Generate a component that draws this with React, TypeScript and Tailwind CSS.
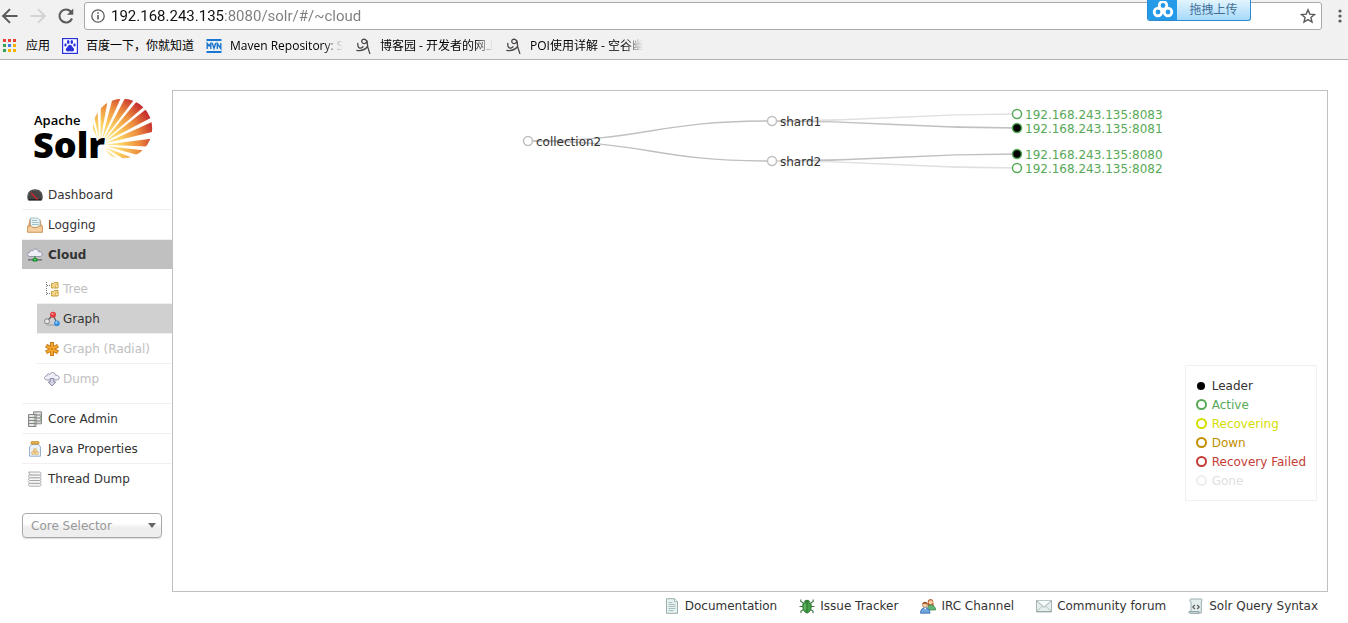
import type { ReactNode } from 'react';

function Svg({ children, size = 'size-4' }: { children: ReactNode; size?: string }) {
  return (
    <svg viewBox="0 0 16 16" className={`${size} shrink-0`} fill="none" aria-hidden="true">
      {children}
    </svg>
  );
}

function DashboardIcon() {
  return (
    <Svg>
      <path d="M.3 10C.3 5 3.8 2.300 8 2.300S15.700 5 15.700 10c0 2-.7 3.700-1.700 3.700H2C1 13.700.3 12 .3 10z" fill="#454545" />
      <path d="M1.500 8.500C2 5 4.500 3.400 8 3.400s6 1.600 6.500 5.100" stroke="#777" strokeWidth="1" strokeDasharray="1 1.500" />
      <path d="M2 12.500h12" stroke="#222" />
      <path d="M4 6l6.500 6.500" stroke="#e0202a" strokeWidth="1.300" />
    </Svg>
  );
}

function LoggingIcon() {
  return (
    <Svg>
      <path d="M2.500 2L1 10h14l-1.500-7.500z" fill="#d79a5c" />
      <path d="M3.500 1h7l2.500 2V11h-9.500z" fill="#e9f3f4" stroke="#93b5bb" strokeWidth=".8" />
      <path d="M5 3.500h5M5 5.500h6.500M5 7.500h6.500" stroke="#8cb3b8" strokeWidth=".8" />
      <path d="M.6 9h3.900l1 1.500h5l1-1.500h3.900v6.300H.6z" fill="#f5cfa0" stroke="#c98d4f" strokeWidth=".9" />
    </Svg>
  );
}

function CloudShape({ y = 0 }: { y?: number }) {
  return (
    <path
      transform={`translate(0 ${y})`}
      d="M3 9.500C-.5 9.300-.2 5.600 2.600 5.500 2.800 3.300 5 3 5.800 3.800 7.200 1 11.300 1.800 11.500 4.700c4.200-.5 5.200 4.600 1.500 4.800z"
      fill="#eeeef7"
      stroke="#8d8da5"
      strokeWidth=".9"
    />
  );
}

function CloudIcon() {
  return (
    <Svg>
      <CloudShape />
      <path d="M1 12.800h14" stroke="#777" strokeWidth="1.600" />
      <path d="M8 9.500v2" stroke="#3d9a45" strokeWidth="1.800" />
      <rect x="5.500" y="11.200" width="5" height="3.200" rx="1" fill="#168a2e" />
      <rect x="7" y="12" width="2" height="1.300" fill="#4fdf65" />
    </Svg>
  );
}

function TreeIcon() {
  return (
    <Svg>
      <path d="M2.500 1v13M3 4.500h4M3 12.500h4" stroke="#777" strokeDasharray="1 1" />
      <path d="M7.500 2.500h2l1-1h3.500v5.500H7.500z" fill="#f3d48b" stroke="#c7962f" strokeWidth=".9" />
      <path d="M7.500 10.500h2l1-1h3.500v5.500H7.500z" fill="#f3d48b" stroke="#c7962f" strokeWidth=".9" />
      <path d="M11.500 4h2.500v2.500h-2.500zM11.500 12h2.500v2.500h-2.500z" fill="#fbe9b8" stroke="#c7962f" strokeWidth=".5" />
    </Svg>
  );
}

function GraphIcon() {
  return (
    <Svg>
      <path d="M3 10l6-6 4 8" stroke="#555" strokeWidth="1.200" />
      <ellipse cx="7" cy="14" rx="5" ry=".8" fill="#aaa" />
      <circle cx="3" cy="10.300" r="2.500" fill="#e8e8e8" stroke="#777" strokeWidth=".9" />
      <circle cx="9" cy="3.800" r="3" fill="#e33a3c" />
      <circle cx="8.500" cy="2.900" r="1.100" fill="#f79090" />
      <circle cx="12.900" cy="12.300" r="2.900" fill="#3990dc" />
      <circle cx="12.400" cy="11.400" r="1.100" fill="#9fd3ff" />
    </Svg>
  );
}

function RadialIcon() {
  return (
    <Svg>
      <path d="M8 3v10M3.700 5.500l8.600 5M12.300 5.500l-8.600 5" stroke="#b76c0d" strokeWidth="3.800" strokeLinecap="square" />
      <path d="M8 3v10M3.700 5.500l8.600 5M12.300 5.500l-8.600 5" stroke="#f4a72e" strokeWidth="2.400" strokeLinecap="square" />
      <circle cx="8" cy="8" r="1.100" fill="#d07d12" />
    </Svg>
  );
}

function DumpIcon() {
  return (
    <Svg>
      <CloudShape y={-0.500} />
      <path d="M6.200 7.500h3.600V11h2L8 15l-3.800-4h2z" fill="#d5d5e6" stroke="#8080a0" strokeWidth=".9" />
    </Svg>
  );
}

function CoreAdminIcon() {
  return (
    <Svg>
      <path d="M6.500.8h8v12h-8z" fill="#d4d4d4" stroke="#8a8a8a" />
      <path d="M6.500 4h8M6.500 7h8M6.500 10h8" stroke="#8a8a8a" />
      <path d="M1.500 3.500h7.500v12H1.500z" fill="#d8d8d8" stroke="#858585" />
      <path d="M1.500 6.500H9M1.500 9.500H9M1.500 12.500H9" stroke="#858585" />
      <path d="M3 5h3M3 8h3M3 11h3M3 14h3M10.500 2.500h2M10.500 5.500h2M10.500 8.500h2" stroke="#f6f6f6" />
      <path d="M7 5h1M7 8h1M7 11h1M7 14h1M13 5.500h1M13 8.500h1" stroke="#7fae77" />
    </Svg>
  );
}

function JavaIcon() {
  return (
    <Svg>
      <path d="M4.500 3.500L2.500 6v9.200h11V6l-2-2.500z" fill="#e8f0f9" stroke="#8baac9" strokeWidth=".9" />
      <rect x="4" y=".6" width="8" height="2.500" rx=".8" fill="#edb44c" stroke="#b77f20" strokeWidth=".7" />
      <circle cx="8" cy="9" r="1.600" fill="#f5d596" stroke="#d4a658" strokeWidth=".6" />
      <circle cx="6.200" cy="12" r="1.700" fill="#f5d596" stroke="#d4a658" strokeWidth=".6" />
      <circle cx="9.800" cy="12" r="1.700" fill="#f5d596" stroke="#d4a658" strokeWidth=".6" />
    </Svg>
  );
}

function ThreadIcon() {
  return (
    <Svg>
      <g fill="#f6f6f6" stroke="#999" strokeWidth=".8">
        <path d="M2 12.300h10.500c2 0 2 2.900 0 2.900H3.500C1 15.200 1 13 2.500 12.300z" />
        <path d="M2 9.500h10.500c2 0 2 2.800 0 2.800H3.500C1 12.300 1 10.200 2.500 9.500z" />
        <path d="M2 6.700h10.500c2 0 2 2.800 0 2.800H3.500C1 9.500 1 7.400 2.500 6.700z" />
        <path d="M2 3.900h10.500c2 0 2 2.800 0 2.800H3.500C1 6.700 1 4.600 2.500 3.900z" />
        <path d="M1.500 1h11c2 0 2 2.900 0 2.900H4C1.800 3.900 2.500 1.800 1.500 1z" />
      </g>
    </Svg>
  );
}

function DocumentIcon() {
  return (
    <Svg>
      <path d="M2.500.7h8l3 3v11.600h-11z" fill="#eaf3f2" stroke="#8fa5a4" strokeWidth=".9" />
      <path d="M10.500.7v3h3" fill="#fff" stroke="#8fa5a4" strokeWidth=".8" />
      <path d="M4.500 4.500h4M4.500 6.500h7M4.500 8.500h7M4.500 10.500h7M4.500 12.500h5" stroke="#9bb8b5" strokeWidth=".9" />
    </Svg>
  );
}

function BugIcon() {
  return (
    <Svg>
      <path d="M4.500 5L1.800 3.500V1.500M11.500 5l2.700-1.500v-2M4 8.500H.5M12 8.500h3.500M4.500 11.500L2 13v2M11.500 11.500L14 13v2" stroke="#39703a" strokeWidth="1.100" />
      <path d="M5 4.300C5.300 1 10.700 1 11 4.300z" fill="#347f38" />
      <path d="M4 5.500c1.800-1.300 6.200-1.300 8 0 .8 4-.5 9-4 9.500-3.500-.5-4.800-5.500-4-9.500z" fill="#45a049" stroke="#27702c" strokeWidth=".9" />
      <path d="M8 5v10" stroke="#27702c" strokeWidth=".8" />
      <path d="M6 6.500v5" stroke="#83c97f" />
    </Svg>
  );
}

function PeopleIcon() {
  return (
    <Svg>
      <path d="M7.700 3.500C8 .2 13.300-.3 13.300 4l.5 4H8z" fill="#b55e2e" />
      <circle cx="10.700" cy="4.300" r="2.100" fill="#f7cfa4" />
      <path d="M7.500 12c0-3.500 1-5 3.200-5s4.900 1.500 4.900 5z" fill="#61b577" stroke="#338249" strokeWidth=".7" />
      <circle cx="5" cy="7" r="2.500" fill="#f7cfa4" stroke="#a6693b" strokeWidth=".6" />
      <path d="M2.300 6.500c.2-4 5.300-3.300 5.500 0-2 0-3-1.200-3.500-1.200-.5.700-1 1-2 1.200z" fill="#8c4b22" />
      <path d="M.5 15.200C.5 11.500 2.400 9.700 5.200 9.700s4.800 1.800 4.800 5.500z" fill="#6ea5df" stroke="#3268a3" strokeWidth=".8" />
      <path d="M4 9.800l1.200 2 1.300-2z" fill="#fff" />
    </Svg>
  );
}

function MailIcon() {
  return (
    <Svg>
      <path d="M.5 2.500h15v11H.5z" fill="#e6eeed" stroke="#9aabaa" strokeWidth=".9" />
      <path d="M.8 13.300L6.500 8M15.200 13.300L9.500 8" stroke="#a7b8b7" strokeWidth=".8" />
      <path d="M.8 2.800L8 9.300l7.200-6.500" fill="#f7fafa" stroke="#90a3a2" strokeWidth=".9" />
      <path d="M.5 14h15" stroke="#8d9d9c" strokeWidth=".7" />
    </Svg>
  );
}

function ScriptIcon() {
  return (
    <Svg>
      <path d="M2.500 1h10.300c2 0 1.900 2 .5 2v12H3V3.500c-1.500 0-1.800-1.800-.5-2.500z" fill="#e4eeee" stroke="#90a5a5" strokeWidth=".9" />
      <path d="M1 13.500h10v1.800H2c-1 0-1.500-1-1-1.800z" fill="#d1dfdf" stroke="#7f9494" strokeWidth=".8" />
      <path d="M6.800 7L4.800 9l2 2M9.200 7l2 2-2 2" stroke="#555" strokeWidth="1.100" />
    </Svg>
  );
}

function SquiggleIcon() {
  return (
    <Svg>
      <path
        d="M1.800 5.500c-.4 4.500 2.500 6 5.200 3.200M10.800 3C8.500-.2 4.800 1.500 6 4.300c1.200 2.300 4.600 1.500 5-1.800 0 4.500 1 8.500 2.800 13M.8 12.300c4.200.8 8.200-.5 10.700-3.800"
        stroke="#4a464a"
        strokeWidth="1.300"
        strokeLinecap="round"
      />
    </Svg>
  );
}

const appColors = ['#e84234', '#e84234', '#e84234', '#35a353', '#3f7ef0', '#f5b400', '#35a353', '#f5b400', '#f5b400'];

function AppsIcon() {
  return (
    <Svg>
      {appColors.map((c, i) => (
        <rect key={i} x={1 + (i % 3) * 5} y={1 + Math.floor(i / 3) * 5} width="3" height="3" fill={c} />
      ))}
    </Svg>
  );
}

function PawIcon() {
  return (
    <Svg>
      <rect x=".6" y=".6" width="14.800" height="14.800" fill="#fff" stroke="#2a32dc" strokeWidth="1.200" />
      <g fill="#2a32dc">
        <ellipse cx="6.200" cy="4" rx="1.300" ry="1.900" />
        <ellipse cx="9.800" cy="4" rx="1.300" ry="1.900" />
        <ellipse cx="3.500" cy="6.900" rx="1.200" ry="1.700" />
        <ellipse cx="12.500" cy="6.900" rx="1.200" ry="1.700" />
        <path d="M8 6.800c1.800 0 1.900 1.900 3.200 3 1.800 1.500.8 4-1.200 3.700-1.400-.2-2.600-.2-4 0-2 .3-3-2.200-1.200-3.700C6.100 8.700 6.200 6.800 8 6.800z" />
      </g>
    </Svg>
  );
}

function MvnIcon() {
  return (
    <Svg>
      <path d="M.5 2h15M.5 14h15" stroke="#1976d2" strokeWidth="2" />
      <path d="M1.200 11V5.500L3 8l1.800-2.500V11M6.200 5L8 10.300 9.800 5M11.300 11V5.500l3.500 5V5" stroke="#1976d2" strokeWidth="1.400" />
    </Svg>
  );
}

const toolButton = 'flex size-5 items-center justify-center';

const bookmarks = [
  { label: '应用', icon: <AppsIcon />, width: 'w-6', gap: 'mr-3' },
  { label: '百度一下，你就知道', icon: <PawIcon />, width: 'w-[110px]', gap: 'mr-2.5' },
  { label: 'Maven Repository: S', icon: <MvnIcon />, width: 'w-[114px]', gap: 'mr-3', fade: true },
  { label: '博客园 - 开发者的网上', icon: <SquiggleIcon />, width: 'w-[114px]', gap: 'mr-3', fade: true },
  { label: 'POI使用详解 - 空谷幽', icon: <SquiggleIcon />, width: 'w-[114px]', gap: 'mr-3', fade: true },
];

function BrowserBar() {
  return (
    <header className="relative border-b border-[#b0b0b0] bg-[#f1f1f1] font-['Open_Sans','Noto_Sans_CJK_SC',sans-serif]">
      <div className="flex h-[30px] items-end">
        <div className="flex h-7 items-center gap-2">
          <button type="button" aria-label="Back" className={toolButton}>
            <Svg size="size-5">
              <path d="M14 8H2.800M8 2.500L2.500 8 8 13.500" stroke="#5a5a5a" strokeWidth="1.600" />
            </Svg>
          </button>
          <button type="button" aria-label="Forward" className={toolButton}>
            <Svg size="size-5">
              <path d="M2 8h11.200M8 2.500L13.500 8 8 13.500" stroke="#d3d3d3" strokeWidth="1.600" />
            </Svg>
          </button>
          <button type="button" aria-label="Reload" className={toolButton}>
            <Svg size="size-5">
              <path d="M12.800 10A5.200 5.200 0 1 1 11.800 4.400l1 1" stroke="#5a5a5a" strokeWidth="1.700" />
              <path d="M13.800 2v5h-5z" fill="#5a5a5a" />
            </Svg>
          </button>
        </div>
        <div className="ml-2 flex h-7 min-w-0 flex-1 items-center rounded-[3px] border border-[#a9a9a9] bg-white pr-[3px] pl-[5px]">
          <Svg>
            <circle cx="8" cy="8" r="6.200" stroke="#5a5a5a" strokeWidth="1.300" />
            <path d="M8 7v4.500M8 4.300v1.500" stroke="#5a5a5a" strokeWidth="1.600" />
          </Svg>
          <input
            aria-label="Address"
            defaultValue="192.168.243.135:8080/solr/#/~cloud"
            className="ml-[5px] min-w-0 flex-1 bg-[linear-gradient(to_right,#111_113px,#7c7c7c_113px)] bg-clip-text font-['Roboto',sans-serif] text-[15px] leading-6 text-transparent outline-none"
          />
          <button type="button" aria-label="Bookmark this page" className={toolButton}>
            <Svg>
              <path d="M8 1.800l1.800 4.300 4.700.4-3.600 3 1.100 4.600L8 11.600 4 14.100l1.100-4.600-3.600-3 4.700-.4z" stroke="#5a5a5a" strokeWidth="1.400" />
            </Svg>
          </button>
        </div>
        <button type="button" aria-label="Menu" className="ml-1.5 flex h-7 w-5 items-center justify-center">
          <Svg>
            <g fill="#5a5a5a">
              <circle cx="10" cy="3" r="1.600" />
              <circle cx="10" cy="8" r="1.600" />
              <circle cx="10" cy="13" r="1.600" />
            </g>
          </Svg>
        </button>
      </div>
      <nav aria-label="Bookmarks" className="flex h-[29px] items-center pt-0.5 pl-0.5">
        {bookmarks.map((b) => (
          <a key={b.label} href="#bookmark" className={`flex items-center gap-2 ${b.gap}`}>
            {b.icon}
            <span
              className={`${b.width} overflow-hidden text-xs leading-5 whitespace-nowrap text-black ${
                b.fade ? '[mask-image:linear-gradient(to_right,#000_82%,transparent_99%)]' : ''
              }`}
            >
              {b.label}
            </span>
          </a>
        ))}
      </nav>
      <button
        type="button"
        className="absolute top-0 right-[97px] flex h-[21px] w-[104px] items-stretch overflow-hidden rounded-b-[3px] border border-t-0 border-[#2a8bd0] bg-linear-to-b from-[#e3f4fe] to-[#a5d9fa] text-xs text-[#3f6f96]"
      >
        <span className="flex w-[29px] items-center justify-center bg-[#259ae8]">
          <svg viewBox="0 0 22 18" className="h-[18px] w-[22px]" fill="none" stroke="#fff" strokeWidth="2.800" aria-hidden="true">
            <circle cx="11" cy="4.500" r="3.800" />
            <circle cx="6" cy="11" r="3.800" />
            <circle cx="16" cy="11" r="3.800" />
          </svg>
        </span>
        <span className="flex-1 leading-5">拖拽上传</span>
      </button>
    </header>
  );
}

const rays: [number, number][] = [
  [115, 107], [102, 94], [89, 80], [75, 66], [62, 53], [50, 41],
  [38, 28], [24, 14], [7, -2], [-7, -15], [-21, -31], [-37, -46],
];

function rayPath([a, b]: [number, number]) {
  const point = (deg: number, r: number) => {
    const t = (deg * Math.PI) / 180;
    return `${(78 + r * Math.cos(t)).toFixed(2)} ${(55 - r * Math.sin(t)).toFixed(2)}`;
  };
  const mid = (a + b) / 2;
  return `M${point(mid, 4)}L${point(a, 75)}L${point(b, 75)}Z`;
}

function Logo() {
  return (
    <a href="#home" className="block" aria-label="Apache Solr">
      <svg viewBox="0 0 150 90" className="h-[90px] w-[150px]" aria-hidden="true">
        <defs>
          <radialGradient id="sun" gradientUnits="userSpaceOnUse" cx="78" cy="55" r="60">
            <stop offset=".1" stopColor="#fff0b0" />
            <stop offset=".35" stopColor="#fcd060" />
            <stop offset=".65" stopColor="#ed8f3e" />
            <stop offset=".95" stopColor="#c52a2c" />
          </radialGradient>
          <clipPath id="disc">
            <circle cx="100.500" cy="38.500" r="29.700" />
          </clipPath>
        </defs>
        <g clipPath="url(#disc)" fill="url(#sun)">
          {rays.map((r) => (
            <path key={r[0]} d={rayPath(r)} />
          ))}
        </g>
        <text x="12" y="35" className="fill-black font-['Open_Sans',sans-serif] text-[13px] font-semibold">
          Apache
        </text>
        <text x="11" y="68" className="fill-black font-['Open_Sans',sans-serif] text-[36px] font-extrabold">
          Solr
        </text>
      </svg>
    </a>
  );
}

const cloudViews = [
  { label: 'Tree', icon: <TreeIcon /> },
  { label: 'Graph', icon: <GraphIcon />, active: true },
  { label: 'Graph (Radial)', icon: <RadialIcon /> },
  { label: 'Dump', icon: <DumpIcon /> },
];

const rowClass = 'flex h-[29px] items-center gap-[5px] pl-[5px]';

function NavRow({ label, icon }: { label: string; icon: ReactNode }) {
  return (
    <a href="#nav" className={rowClass}>
      {icon}
      {label}
    </a>
  );
}

function Sidebar() {
  return (
    <aside className="w-[150px] shrink-0">
      <Logo />
      <ul>
        <li className="border-b border-[#f0f0f0]">
          <NavRow label="Dashboard" icon={<DashboardIcon />} />
        </li>
        <li className="border-b border-[#f0f0f0]">
          <NavRow label="Logging" icon={<LoggingIcon />} />
        </li>
        <li className="border-b border-[#f0f0f0]">
          <a href="#cloud" aria-current="true" className={`${rowClass} bg-[#c0c0c0] font-bold`}>
            <CloudIcon />
            Cloud
          </a>
          <ul className="mt-[5px] mb-2.5 pl-[15px]">
            {cloudViews.map((v) => (
              <li key={v.label} className="border-b border-[#f0f0f0] last:border-b-0">
                <a
                  href="#view"
                  className={`flex h-[29px] items-center gap-[3px] pl-[7px] ${v.active ? 'bg-[#d0d0d0] text-[#333]' : 'text-[#c0c0c0]'}`}
                >
                  {v.icon}
                  {v.label}
                </a>
              </li>
            ))}
          </ul>
        </li>
        <li className="border-b border-[#f0f0f0]">
          <NavRow label="Core Admin" icon={<CoreAdminIcon />} />
        </li>
        <li className="border-b border-[#f0f0f0]">
          <NavRow label="Java Properties" icon={<JavaIcon />} />
        </li>
        <li>
          <NavRow label="Thread Dump" icon={<ThreadIcon />} />
        </li>
      </ul>
      <div className="mt-5 mr-2.5 grid items-center">
        <select
          aria-label="Core Selector"
          className="col-start-1 row-start-1 h-[25px] appearance-none rounded-[4px] border border-[#aaa] bg-linear-to-b from-white from-40% to-[#eee] to-60% pl-2 text-[#999] shadow-[0_1px_1px_#ddd]"
        >
          <option>Core Selector</option>
        </select>
        <svg viewBox="0 0 8 5" className="pointer-events-none col-start-1 row-start-1 mr-1.5 h-[5px] w-2 justify-self-end" aria-hidden="true">
          <path d="M0 0h8L4 5z" fill="#666" />
        </svg>
      </div>
    </aside>
  );
}

const leaves = [
  { label: '192.168.243.135:8083', y: 23, from: 30, leader: false },
  { label: '192.168.243.135:8081', y: 37, from: 30, leader: true },
  { label: '192.168.243.135:8080', y: 63, from: 70, leader: true },
  { label: '192.168.243.135:8082', y: 77, from: 70, leader: false },
];

function link(x1: number, y1: number, x2: number, y2: number) {
  const m = (x1 + x2) / 2;
  return `M${x1} ${y1}C${m} ${y1} ${m} ${y2} ${x2} ${y2}`;
}

function ClusterGraph() {
  return (
    <svg viewBox="0 0 1154 100" className="w-full font-['DejaVu_Sans',sans-serif] text-xs" role="img" aria-label="Cloud graph">
      <g fill="none" strokeWidth="1.500">
        {leaves.map((l) => (
          <path key={l.label} d={link(599, l.from, 844, l.y)} stroke={l.leader ? '#c0c0c0' : '#e0e0e0'} />
        ))}
        <path d={link(355, 50, 599, 30)} stroke="#c0c0c0" />
        <path d={link(355, 50, 599, 70)} stroke="#c0c0c0" />
      </g>
      <g fill="#fff" stroke="#c0c0c0" strokeWidth="1.500">
        <circle cx="355" cy="50" r="4.500" />
        <circle cx="599" cy="30" r="4.500" />
        <circle cx="599" cy="70" r="4.500" />
      </g>
      <g fill="#333">
        <text x="363" y="55">collection2</text>
        <text x="607" y="35">shard1</text>
        <text x="607" y="75">shard2</text>
      </g>
      {leaves.map((l) => (
        <g key={l.label}>
          <circle cx="844" cy={l.y} r="4.500" fill={l.leader ? '#000' : '#fff'} stroke="#57a957" strokeWidth="1.500" />
          <text x="852" y={l.y + 5} fill="#57a957">
            {l.label}
          </text>
        </g>
      ))}
    </svg>
  );
}

const legend = [
  { label: 'Leader', text: 'text-[#333]', dot: 'size-2 bg-black' },
  { label: 'Active', text: 'text-[#57a957]', dot: 'size-[11px] border-2 border-[#57a957]' },
  { label: 'Recovering', text: 'text-[#d5dd00]', dot: 'size-[11px] border-2 border-[#d5dd00]' },
  { label: 'Down', text: 'text-[#c48f00]', dot: 'size-[11px] border-2 border-[#c48f00]' },
  { label: 'Recovery Failed', text: 'text-[#c43c35]', dot: 'size-[11px] border-2 border-[#c43c35]' },
  { label: 'Gone', text: 'text-[#e0e0e0]', dot: 'size-[11px] border-2 border-[#eee]' },
];

function Legend() {
  return (
    <ul className="mr-2.5 border border-[#f0f0f0] px-2.5 py-2.5">
      {legend.map((l) => (
        <li key={l.label} className={`flex h-[19px] items-center gap-[5px] ${l.text}`}>
          <span className="flex w-[11px] justify-center">
            <span className={`shrink-0 rounded-full ${l.dot}`} />
          </span>
          {l.label}
        </li>
      ))}
    </ul>
  );
}

const footerLinks = [
  { label: 'Documentation', icon: <DocumentIcon /> },
  { label: 'Issue Tracker', icon: <BugIcon /> },
  { label: 'IRC Channel', icon: <PeopleIcon /> },
  { label: 'Community forum', icon: <MailIcon /> },
  { label: 'Solr Query Syntax', icon: <ScriptIcon /> },
];

export default function App() {
  return (
    <div className="min-h-screen bg-white font-['DejaVu_Sans',sans-serif] text-xs text-[#333]">
      <BrowserBar />
      <div className="flex pt-[30px] pr-5 pl-[22px]">
        <Sidebar />
        <div className="min-w-0 flex-1">
          <main className="flex min-h-[502px] flex-col items-end justify-between border border-[#c0c0c0] pb-[90px]">
            <ClusterGraph />
            <Legend />
          </main>
          <footer className="flex h-[28px] items-center justify-end gap-[22px] pr-2.5">
            {footerLinks.map((f) => (
              <a key={f.label} href="#footer" className="flex items-center gap-[5px]">
                {f.icon}
                {f.label}
              </a>
            ))}
          </footer>
        </div>
      </div>
    </div>
  );
}
